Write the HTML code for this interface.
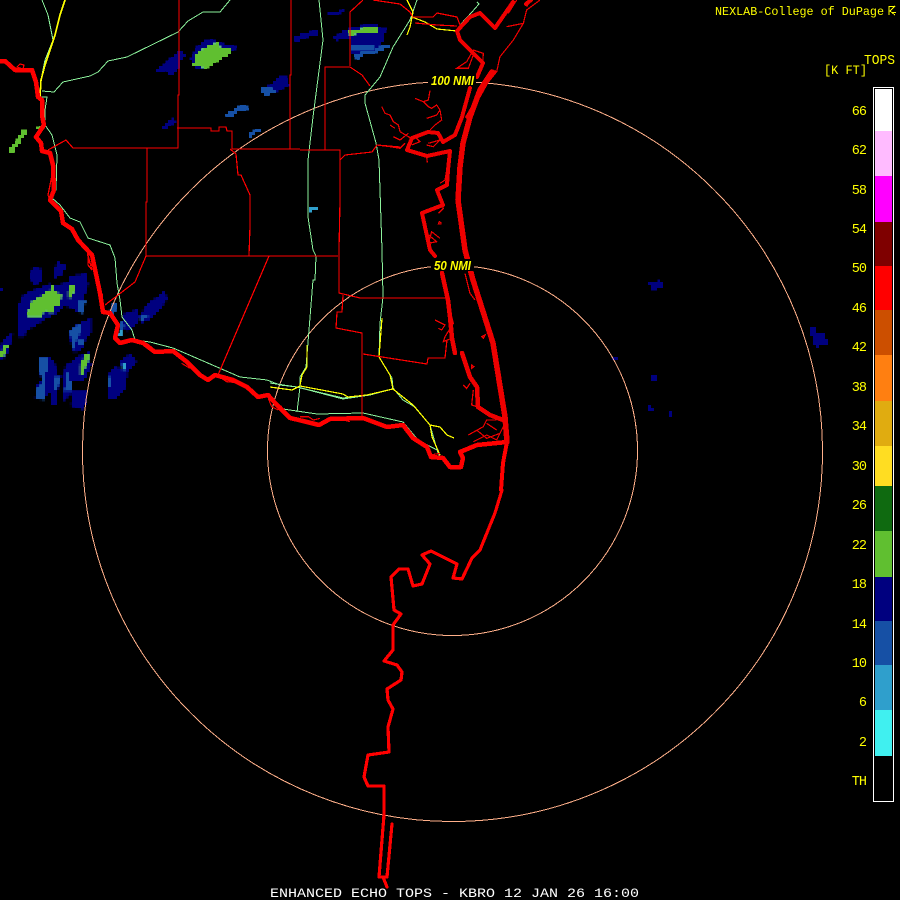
<!DOCTYPE html>
<html><head><meta charset="utf-8"><style>
html,body{margin:0;padding:0;background:#000;width:900px;height:900px;overflow:hidden}
svg{display:block}
text{font-family:"Liberation Mono",monospace}
.w path[fill="#00007f"]{stroke:#00007f;stroke-width:7}
</style></head><body>
<svg width="900" height="900" viewBox="0 0 900 900" shape-rendering="crispEdges" fill="none">
<defs>
<filter id="px" filterUnits="userSpaceOnUse" x="0" y="0" width="900" height="900" color-interpolation-filters="sRGB">
<feFlood x="1" y="1" width="1" height="1" flood-color="#000" flood-opacity="1"/>
<feComposite width="3" height="3" result="c"/>
<feTile in="c" result="t"/>
<feComposite in="SourceGraphic" in2="t" operator="in"/>
<feMorphology operator="dilate" radius="1"/>
</filter>
</defs>
<rect width="900" height="900" fill="#000"/>
<g filter="url(#px)">
<!-- echoes, north -->
<g transform="scale(.33333)" stroke="none">
<path fill="#00007f" d="M468 210L490 195 515 170 540 150 552 155V165H562L545 180 535 205 512 228 500 212 470 215Z"/>
<path fill="#00007f" d="M570 180L590 140 610 122 640 120 680 135 712 140 700 155 690 160 650 185 615 205 595 208 580 195Z"/>
<path fill="#60bf30" d="M578 195L590 160 625 135 652 128 665 145H695V160L660 180 620 205 590 200Z"/>
<path fill="#00007f" d="M780 265L810 255 835 230H860L870 255 830 275 795 288 785 280Z"/>
<path fill="#1650a5" d="M780 265L810 262 830 275 795 288 785 280Z"/>
<path fill="#1650a5" d="M678 342L715 320 725 312H740L744 328 715 335 695 352H680Z"/>
<path fill="#00007f" d="M486 378L505 365 520 355 528 368 510 378 495 390H488Z"/>
<path fill="#1650a5" d="M744 402L765 390 780 384V396L762 402 750 414H744Z"/>
<path fill="#00007f" d="M882 108H900V125H890L882 117Z"/>
<path fill="#60bf30" d="M24 450L40 435 55 410 65 392H84V402L70 412 55 435 38 460H28Z"/>
<path fill="#60bf30" d="M108 385L130 372V390H114Z"/>
</g>
<!-- echoes, west cluster -->
<g class="w" transform="translate(0 255) scale(.33333)" stroke="none">
<path fill="#00007f" d="M55 175L60 150 70 125 95 110 125 100 150 90 165 95 205 85 215 65 255 60 262 90 250 120V155L230 165 215 155 190 150 165 175 130 190 105 210 75 225 72 243H60L55 210Z"/>
<path fill="#00007f" d="M95 60L100 40 125 45 120 80 100 85Z"/>
<path fill="#00007f" d="M165 45L175 25 195 35 180 60 165 65Z"/>
<path fill="#60bf30" d="M80 180L95 140 130 118 140 105H150L155 88H162V105L185 120 180 150 165 155 160 175H150L135 165 125 185H85Z"/>
<path fill="#60bf30" d="M204 110L212 88H228L220 115 215 130H204Z"/>
<path fill="#1650a5" d="M232 138H258L252 160 245 180 232 165Z"/>
<path fill="#00007f" d="M210 230L235 210 270 195V230L250 260V275L225 290 218 275Z"/>
<path fill="#1650a5" d="M210 230L232 210H245L238 240 225 265V290L218 275Z"/>
<path fill="#1650a5" d="M234 255H252V272H234Z"/>
<path fill="#00007f" d="M0 100H6V105H0Z"/>
<path fill="#00007f" d="M0 300L10 260 35 240 30 260 15 305 0 308Z"/>
<path fill="#60bf30" d="M3 290L15 268H28L18 285 12 305H3Z"/>
<path fill="#00007f" d="M120 310H145L160 320 170 365H180L170 405 168 445H155V405L135 420 108 430 112 395 130 375 120 350Z"/>
<path fill="#1650a5" d="M120 310H147V350L135 352V385L136 435H122V430H108L112 395 125 390V370L120 350Z"/>
<path fill="#1650a5" d="M165 365H180L172 405H162Z"/>
<path fill="#00007f" d="M205 330L240 305 268 295 270 330 250 375H215V410L195 430 192 390 198 335Z"/>
<path fill="#1650a5" d="M198 355H208V335H210V380H216V408H192L198 385Z"/>
<path fill="#60bf30" d="M240 330L250 310 258 296H268L264 325 252 345 248 358H240Z"/>
<path fill="#00007f" d="M215 412H255L258 440 245 460 215 450 220 435Z"/>
<path fill="#00007f" d="M325 365L345 340 380 345 375 395 345 430H325L330 400Z"/>
<path fill="#1650a5" d="M324 365H332V395H324Z"/>
<path fill="#00007f" d="M365 320L390 300 405 320 385 345H370Z"/>
<path fill="#2f9fcc" d="M366 325H378V345H366Z"/>
<path fill="#1650a5" d="M330 165L340 142H354V155L345 170 340 185 330 180Z"/>
<path fill="#00007f" d="M372 180L392 175 412 165 412 200 395 218 380 225 372 210Z"/>
<path fill="#1650a5" d="M364 198L375 215 368 225H360Z"/>
<path fill="#2f9fcc" d="M357 222H366V245H354Z"/>
<path fill="#00007f" d="M420 185L445 150 490 115 500 130 470 170 440 195 425 200Z"/>
<path fill="#1650a5" d="M420 185L440 178 445 185 432 190 428 200H420Z"/>
</g>
<!-- echoes, top centre -->
<g transform="translate(300 0) scale(.33333)" stroke="none">
<path fill="#00007f" d="M85 38L130 30V37L100 47H85Z"/>
<path fill="#00007f" d="M0 100L30 95 50 90 55 105 25 112 0 120Z"/>
<path fill="#00007f" d="M102 112L130 90 150 85 215 70 235 68 240 85H258L255 105 245 135 225 150 195 155 165 165H150V120L120 115 110 122Z"/>
<path fill="#1650a5" d="M160 165L190 155 225 150 245 135H270L268 145 245 150 225 160 190 165 170 180 165 172Z"/>
<path fill="#1650a5" d="M156 138H220V148H156Z"/>
<path fill="#60bf30" d="M145 92L235 78V95L175 100 150 108Z"/>
<path fill="#2f9fcc" d="M27 627L39 618H54V630H39V634H27Z"/>
</g>
<!-- echoes, east -->
<g transform="translate(600 260) scale(.33333)" stroke="none" fill="#00007f">
<path d="M144 63H162V69H168V75L177 60H183V69H192V81H168V89H156V84H150V78H144Z"/>
<path d="M36 288H42V282H45V294H51V303H42L39 294H36Z"/>
<path d="M156 342H168V360H174V366H162V360H156Z"/>
<path d="M144 438H156V447H162V456H144Z"/>
<path d="M204 450H216V465H213V471H210V474H204Z"/>
<path d="M630 204H648V216H654V219H672V225H678V240H684V252H672V255H660V261H654V264H648V252H642V240H636V225H633V213H630Z"/>
</g>
</g>
<!-- rings -->
<g stroke="#ffb08a" stroke-width="1">
<circle cx="452.5" cy="451.5" r="370"/>
<circle cx="452.5" cy="450.5" r="185"/>
</g>
<!-- green roads -->
<g stroke="#8cf29c" stroke-width="1">
<path d="M42 0L48 15 53 40 45 60 41 80 40 97H47L45 110V125L52 135 57 155 56 190 52 198 60 205 70 218 80 222 88 238 110 245 115 258 117 283 120 300 122 317 132 330 135 340 150 342 173 348 187 354 217 367 240 377 267 380 280 385 297 387 343 398 367 395 392 389"/>
<path d="M270 383L297 387 343 399 370 395 392 389"/>
<path d="M283 409L317 414 363 413 403 422 418 440 437 450 440 457"/>
<path d="M300 387L297 412"/>
<path d="M319 0L323 40 313 117 308 160V217L313 250 316 256 315 280 313 280 309 330 306 367 300 377 300 387"/>
<path d="M417 0L410 20 393 47 380 77 365 95V103L376 143 379 160 382 250 383 297 380 323 379 357 392 378 393 388 403 400 415 407 430 425 438 453"/>
<path d="M477 2L479 4 472 12 460 25"/>
<path d="M230 0L220 12H203L188 21 178 32 127 57 108 61 98 72 90 76 63 82 54 92 42 91"/>
</g>
<!-- yellow roads -->
<g stroke="#ffff00" stroke-width="1.2">
<path stroke-width="1.6" d="M65 0L60 15 55 35 45 65 41 80 40 97"/>
<path d="M407 0L413 12 412 17 410 27 407 35"/>
<path d="M412 17L425 22 437 29 457 31"/>
<path d="M270 387L292 390 300 386 343 394 348 397 367 395 393 389"/>
<path d="M300 385L302 375 307 367 307 345"/>
<path d="M382 318L379 357 390 375 393 389 413 405 430 425 432 437 440 455"/>
<path d="M430 425L440 427 447 435 454 438"/>
</g>
<!-- county lines -->
<g stroke="#ff0000" stroke-width="1.2">
<path d="M179 0V95H178V148H73L66 140 48 150"/>
<path d="M291 0V75H290V149"/>
<path d="M177 128H211V131H219V127H226L227 131H232V149H300"/>
<path d="M147 148V202H146V256H338"/>
<path d="M230 149L236 154 238 175H241L250 195V226L249 256"/>
<path d="M146 256L135 282 105 305"/>
<path d="M269 256L218 375"/>
<path d="M300 150H340V160L345 155 372 152 377 145 400 147"/>
<path d="M340 160V200L339 250V293L360 298H447"/>
<path d="M325 150V67H350L362 75 370 86"/>
<path d="M350 66V12L363 0"/>
<path d="M373 0L400 4 410 12 412 16"/>
<path d="M343 295L342 312H337L336 328 362 333V418"/>
<path d="M363 354L427 364 428 358 445 358 447 340"/>
<path d="M412 17H433L437 13 457 17 460 25"/>
<path d="M415 23L437 25 457 26"/>
<path d="M20 64L17 67 23 69 24 65Z"/>
<path d="M88 255L92 270 88 265Z"/>
<path d="M52 175L48 195 50 200"/>
</g>
<!-- creeks (zoom 2 coordinates) -->
<g transform="translate(300 0) scale(.33333)" stroke="#ee0000" stroke-width="3.6">
<path d="M390 272L385 300 370 305 345 295M370 305L385 320 395 325 410 315 420 330 410 345 380 355M420 330L425 360 405 375 390 390"/>
<path d="M245 320L255 340 270 345 280 365 295 375 300 395 325 410 335 415M280 410L300 420 325 400M270 375L285 385"/>
<path d="M230 435L270 440 300 445 315 430M350 415L360 425 335 435M385 430L420 420 400 440 380 435"/>
<path d="M380 470L382 488"/>
<path d="M500 185L520 150 550 160 548 190M500 185L470 205 505 205 520 165"/>
<path d="M590 215L600 170 640 120 670 70 620 80M670 70L680 30 720 0M650 0L625 40M690 0L680 20"/>
<path d="M440 510L435 540 420 550M420 600L430 625 415 640M425 670L418 665 415 672 425 672M380 700L410 725 385 730 395 695 420 715"/>
</g>
<g transform="translate(270 250) scale(.33333)" stroke="#ee0000" stroke-width="3.6">
<path d="M495 210L525 225 515 240 505 235M545 200L550 220 525 260 520 275 545 265"/>
<path d="M585 70L600 130 615 150M635 260L645 255 640 265ZM605 345L612 350 605 355Z"/>
<path d="M580 405L590 415 600 400M610 420L605 465 620 470"/>
<path d="M595 555L640 530 650 510 680 510M620 540L650 565 690 550M610 575L650 555 680 570 700 530M650 520L680 540"/>
<path d="M20 460L35 470M90 500L115 500 130 510 150 505M220 510L240 515M300 510L330 525M480 615L510 610"/>
</g>
<g transform="translate(0 250) scale(.33333)" stroke="#ee0000" stroke-width="3.6">
<path d="M262 0L265 35 280 50M300 125L308 135 300 145M440 280L455 292 440 290M545 340L570 355M650 375L680 395 730 400 745 415M805 445L815 470 835 480"/>
</g>
<!-- thick coast -->
<g stroke="#ff0000" stroke-width="3" stroke-linejoin="round" stroke-linecap="round">
<path stroke-width="4.5" d="M0 61H5L15 70H32L36 82 38 97 42 100V115L44 125 36 137 41 143 42 151 50 153 53 165 54 190 50 200 61 211 63 223 72 229 78 240 92 255 100 293 103 312 110 313 118 325 115 338 120 343 132 340 143 343 155 352 173 351 187 362 200 375 208 380 215 375 233 380 247 387 258 397 268 395 277 405 290 418 303 421 319 425 330 419 363 418 387 427 403 425 413 438 427 447 431 457 443 458 450 467 461 467 463 458 460 452 477 445 507 442"/>
<path stroke-width="4" d="M507 442L503 463 501 490"/>
<path stroke-width="3.2" d="M502 490L495 513 480 550 472 558 462 579 453 578 457 564 431 551 422 555 430 564 422 584 413 586 408 569H399L391 577 394 610 401 614 393 625V650L384 661 397 665 402 672 401 680 387 689 388 700 393 709 388 727 389 752 368 755 364 777 368 786H384V815L379 877H383L387 887"/>
<path stroke-width="3.2" d="M392 824L387 877 383 877"/>
<path stroke="#ee0000" stroke-width="5.5" d="M507 442L505 417 493 343 473 280 465 250 458 200 460 167 463 143 470 117 480 90 492 72"/>
<path stroke="#ee0000" stroke-width="3.5" d="M467 117L477 100 487 82 495 72"/>
<path stroke="#ee0000" stroke-width="4" d="M526 4L531 0"/>
<path stroke="#ee0000" stroke-width="4" d="M513 2L495 28 480 13 470 17 457 31 460 40 470 50 483 63 477 77"/>
<path stroke="#ee0000" stroke-width="4" d="M470 88L462 117 455 135 443 142 438 133 428 132 412 138 407 150 427 156 450 151 448 170 447 185 437 190 443 205 422 213 430 250 435 256"/>
<path stroke="#ee0000" stroke-width="4.5" d="M442 273L448 300 450 317 452 338 455 353"/>
<path stroke="#ee0000" stroke-width="4.5" d="M462 353L470 377 477 387 478 407 490 415 503 420"/>
</g>
<!-- ring labels -->
<rect x="428" y="74" width="48" height="12" fill="#000"/>
<rect x="431" y="259" width="43" height="12" fill="#000"/>
<text x="431" y="85" fill="#ffff00" font-size="12.500" font-weight="bold" font-style="italic" textLength="43" lengthAdjust="spacingAndGlyphs" style="font-family:'Liberation Sans',sans-serif">100 NMI</text>
<text x="434" y="270" fill="#ffff00" font-size="12.500" font-weight="bold" font-style="italic" textLength="37" lengthAdjust="spacingAndGlyphs" style="font-family:'Liberation Sans',sans-serif">50 NMI</text>
<!-- legend -->
<rect x="873.5" y="87.5" width="20" height="714" fill="#000" stroke="#fff"/>
<g stroke="none">
<rect x="875" y="89" width="17" height="42" fill="#fff"/>
<rect x="875" y="131" width="17" height="45" fill="#ffbbff"/>
<rect x="875" y="176" width="17" height="46" fill="#ff00ff"/>
<rect x="875" y="222" width="17" height="44" fill="#7f0000"/>
<rect x="875" y="266" width="17" height="44" fill="#ff0000"/>
<rect x="875" y="310" width="17" height="45" fill="#cc4f00"/>
<rect x="875" y="355" width="17" height="46" fill="#ff7f11"/>
<rect x="875" y="401" width="17" height="45" fill="#e0ac10"/>
<rect x="875" y="446" width="17" height="40" fill="#ffdd22"/>
<rect x="875" y="486" width="17" height="45" fill="#0f6a10"/>
<rect x="875" y="531" width="17" height="46" fill="#60bf30"/>
<rect x="875" y="577" width="17" height="44" fill="#00007f"/>
<rect x="875" y="621" width="17" height="44" fill="#1650a5"/>
<rect x="875" y="665" width="17" height="45" fill="#2f9fcc"/>
<rect x="875" y="710" width="17" height="46" fill="#40f0f0"/>
</g>
<g fill="#ffff00" font-size="13.500" text-anchor="end" letter-spacing="-1">
<text x="866" y="115">66</text><text x="866" y="154">62</text><text x="866" y="194">58</text>
<text x="866" y="233">54</text><text x="866" y="272">50</text><text x="866" y="312">46</text>
<text x="866" y="351">42</text><text x="866" y="391">38</text><text x="866" y="430">34</text>
<text x="866" y="470">30</text><text x="866" y="509">26</text><text x="866" y="549">22</text>
<text x="866" y="588">18</text><text x="866" y="628">14</text><text x="866" y="667">10</text>
<text x="866" y="706">6</text><text x="866" y="746">2</text><text x="866" y="785">TH</text>
</g>
<g fill="#ffff00">
<text x="715" y="15" font-size="12" textLength="169" lengthAdjust="spacingAndGlyphs">NEXLAB-College of DuPage</text>
<text x="864" y="64" font-size="14" textLength="31" lengthAdjust="spacingAndGlyphs">TOPS</text>
<text x="824" y="74" font-size="13" textLength="43" lengthAdjust="spacingAndGlyphs">[K FT]</text>
</g>
<path d="M889 6.500H895M889 6V15M895 6L890 11 895 15M892 12.500H896" stroke="#ffff00" stroke-width="1"/>
<text x="270" y="897" fill="#fff" font-size="12.500" textLength="369" lengthAdjust="spacingAndGlyphs">ENHANCED ECHO TOPS - KBRO 12 JAN 26 16:00</text>
</svg>
</body></html>
